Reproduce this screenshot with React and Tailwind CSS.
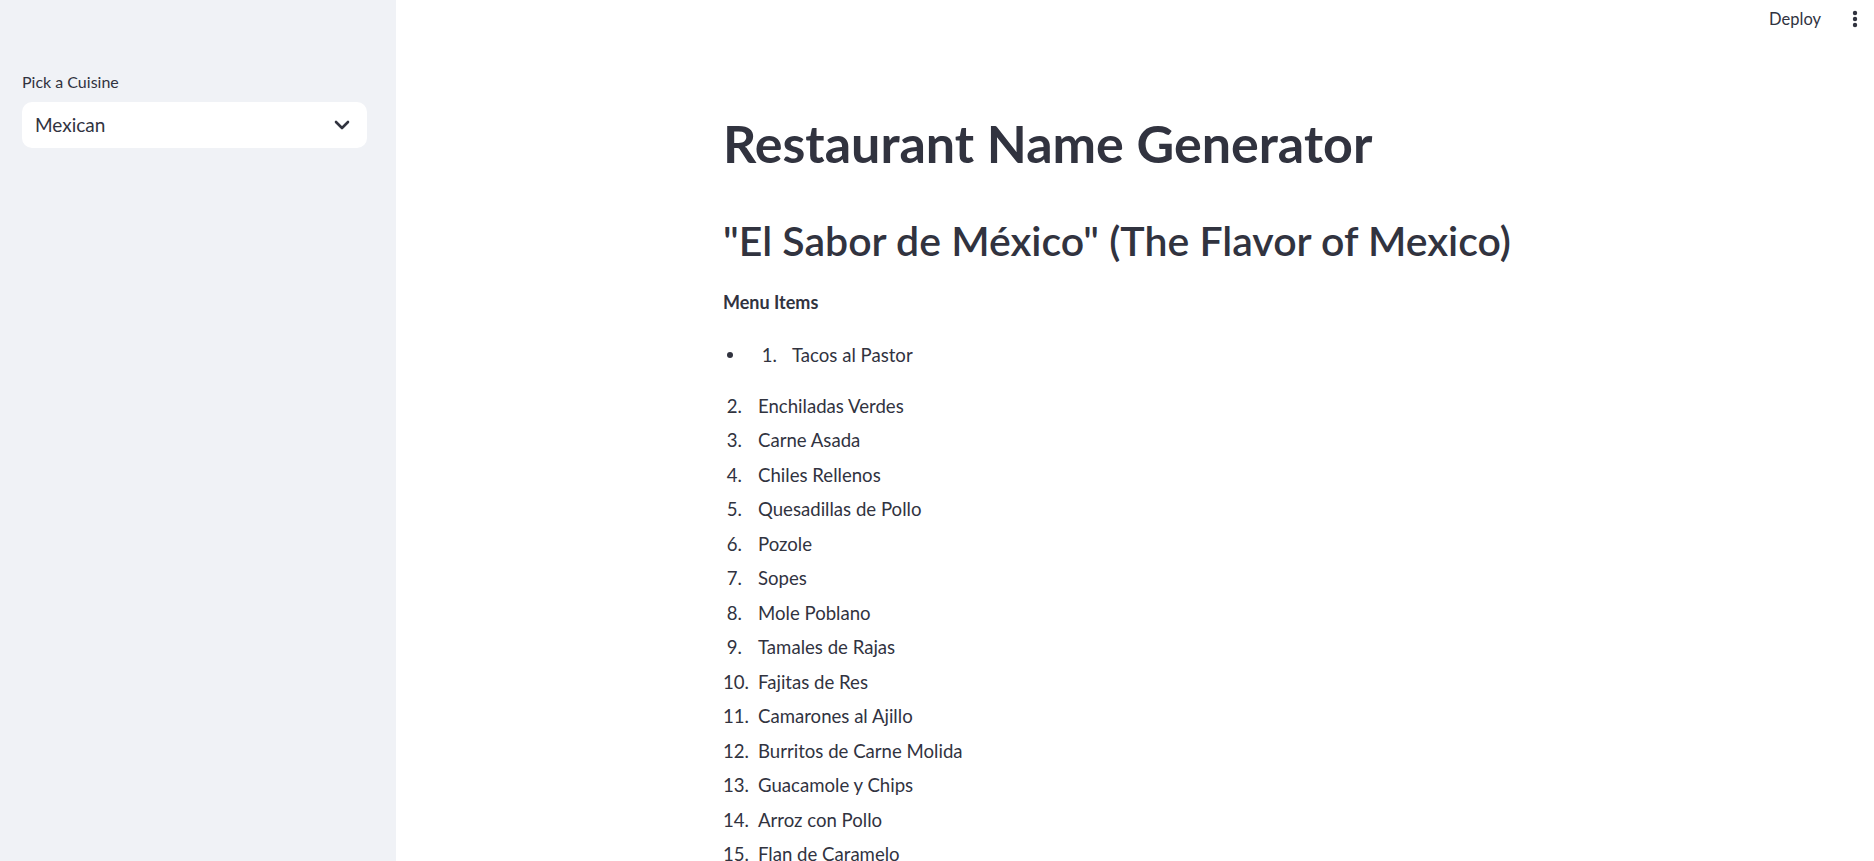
import React from 'react';
import { ChevronDown } from 'lucide-react';

const font = { fontFamily: 'Lato, "Noto Sans", sans-serif' };

const items = [
  'Enchiladas Verdes',
  'Carne Asada',
  'Chiles Rellenos',
  'Quesadillas de Pollo',
  'Pozole',
  'Sopes',
  'Mole Poblano',
  'Tamales de Rajas',
  'Fajitas de Res',
  'Camarones al Ajillo',
  'Burritos de Carne Molida',
  'Guacamole y Chips',
  'Arroz con Pollo',
  'Flan de Caramelo',
];

const Sidebar = () => (
  <aside className="w-[396px] shrink-0 bg-[#f0f2f6] pl-[22px] pr-[29px] pt-[70px]">
    <label className="block text-[16px] leading-[24px] text-[#31333f] mb-[8px]">Pick a Cuisine</label>
    <div className="h-[46px] rounded-[10px] bg-white flex items-center justify-between pl-[13px] pr-[13px]">
      <span className="text-[19px] text-[#31333f]">Mexican</span>
      <ChevronDown size={24} strokeWidth={2.6} className="text-[#31333f]" />
    </div>
  </aside>
);

const Header = () => (
  <div className="h-[38px] shrink-0 flex items-center justify-end pr-[16px] gap-[31px]">
    <span className="text-[16.5px] text-[#31333f]">Deploy</span>
    <svg width="6" height="18" viewBox="0 0 6 18" className="text-[#31333f]">
      <circle cx="3" cy="3" r="2.2" fill="currentColor" />
      <circle cx="3" cy="9" r="2.2" fill="currentColor" />
      <circle cx="3" cy="15" r="2.2" fill="currentColor" />
    </svg>
  </div>
);

const App = () => {
  return (
    <div className="flex h-[861px] w-[1874px] overflow-hidden bg-white text-[#31333f]" style={font}>
      <Sidebar />
      <main className="flex-1 flex flex-col">
        <Header />
        <div className="mx-auto w-[824px] shrink-0 pt-[75px]">
          <h1 className="text-[52px] leading-[61px] font-bold">Restaurant Name Generator</h1>
          <h2 className="mt-[42px] text-[41px] leading-[49px] font-semibold">"El Sabor de México" (The Flavor of Mexico)</h2>
          <p className="mt-[25px] text-[18px] leading-[24px] font-bold">Menu Items</p>

          {/* model put a numbered list inside a bullet */}
          <ul className="mt-[24px]">
            <li className="flex items-center text-[18.6px] leading-[34.5px]">
              <span className="w-[35px] flex items-center">
                <span className="ml-[4px] w-[6px] h-[6px] rounded-full bg-[#31333f]" />
              </span>
              <span className="w-[34px] pr-[15px] text-right">1.</span>
              <span>Tacos al Pastor</span>
            </li>
          </ul>

          <ol className="mt-[16px]">
            {items.map((item, i) => (
              <li key={item} className="flex text-[18.6px] leading-[34.5px]">
                <span className="w-[35px] pr-[16px] text-right">{i + 2}.</span>
                <span>{item}</span>
              </li>
            ))}
          </ol>
        </div>
      </main>
    </div>
  );
};

export default App;
